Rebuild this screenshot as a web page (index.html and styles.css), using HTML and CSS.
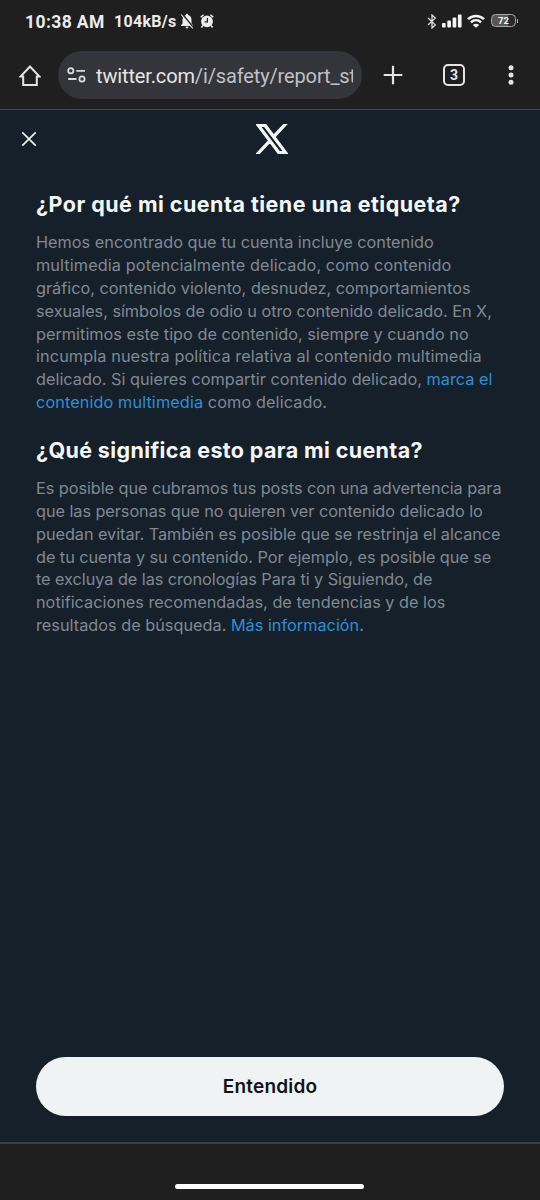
FILE: index.html
```html
<!DOCTYPE html>
<html lang="es">
<head>
<meta charset="utf-8">
<title>X</title>
<link rel="stylesheet" href="styles.css">
</head>
<body>
<div class="phone">
  <header class="chrome">
    <div class="status">
      <span class="clock">10:38 AM</span>
      <span class="speed">104kB/s</span>
      <svg class="bell" width="14" height="16" viewBox="0 0 14 16"><path d="M7 .8c.8 0 1.200.6 1.200 1.200C10.600 2.700 11.500 4.500 11.500 7v3.500l1.500 1.700v.8H1v-.8l1.500-1.700V7c0-2.500.9-4.300 3.300-5C5.800 1.400 6.200.8 7 .8zM5.500 13.800h3c0 2-3 2-3 0z" fill="#ececec"/><path d="M2.300 1l11 13.500" stroke="#1f1f1f" stroke-width="1.500"/><path d="M1.200 1.500l11.500 13.800" stroke="#ececec" stroke-width="1.100"/></svg>
      <svg class="alarm" width="14" height="14" viewBox="0 0 14 14"><circle cx="7" cy="7.400" r="5.900" fill="#ececec"/><path d="M.7 3.300L3.600.8M13.300 3.300L10.400.8M2.900 11.500l-1.500 2M11.100 11.500l1.500 2" stroke="#ececec" stroke-width="1.500"/><path d="M7.400 4v3.900H4.600" fill="none" stroke="#1f1f1f" stroke-width="1.200"/></svg>
      <span class="grow"></span>
      <svg class="bt" width="10" height="15" viewBox="0 0 10 15"><path d="M1 4l7.300 6.900L5 14V1l3.300 3.100L1 11" fill="none" stroke="#dedede" stroke-width="1.300"/></svg>
      <svg class="signal" width="20" height="14" viewBox="0 0 20 14" fill="#f4f4f4"><rect x="0" y="9" width="3.700" height="4.500" rx="1"/><rect x="5.300" y="6.500" width="3.700" height="7" rx="1"/><rect x="10.600" y="3.500" width="3.700" height="10" rx="1"/><rect x="15.900" y=".5" width="3.700" height="13" rx="1"/></svg>
      <svg class="wifi" width="18" height="14" viewBox="0 0 18 14"><path d="M1 5.200c4.600-4.300 11.400-4.300 16 0M3.900 8.400c3-2.800 7.200-2.800 10.200 0" fill="none" stroke="#f4f4f4" stroke-width="2.500"/><path d="M5.800 10.900c2-1.600 4.400-1.600 6.400 0L9 13.800z" fill="#f4f4f4"/></svg>
      <span class="battery">72</span><span class="nub"></span>
    </div>
    <div class="toolbar">
      <svg class="home" width="22" height="23" viewBox="0 0 22 23"><path d="M1.500 12.500H4.200V20.900h13.600V12.500h2.700L11 2.500z" fill="none" stroke="#e4e4e4" stroke-width="2"/></svg>
      <div class="omnibox">
        <svg width="20" height="16" viewBox="0 0 20 16" fill="none" stroke="#dadada" stroke-width="1.800"><circle cx="3.800" cy="3.800" r="2.600"/><path d="M9.300 3.800H18M1.200 12H9.500"/><circle cx="15" cy="12" r="2.600"/></svg>
        <div class="url"><span class="host">twitter.com</span>/i/safety/report_st</div>
      </div>
      <svg class="plus" width="20" height="20" viewBox="0 0 20 20"><path d="M10 .7v18.600M.7 10h18.600" stroke="#e4e4e4" stroke-width="2.200"/></svg>
      <div class="tabs">3</div>
      <svg class="dots" width="6" height="22" viewBox="0 0 6 22" fill="#e4e4e4"><circle cx="3" cy="3.800" r="2.500"/><circle cx="3" cy="11" r="2.500"/><circle cx="3" cy="18.200" r="2.500"/></svg>
    </div>
  </header>
  <main class="page">
    <div class="topbar">
      <svg class="close" width="16" height="16" viewBox="0 0 16 16"><path d="M1.300 1.300l13.400 13.400M14.700 1.300L1.300 14.700" stroke="#eff3f4" stroke-width="1.650"/></svg>
      <svg class="logo" width="32" height="30" viewBox="-5 -5 310 310" preserveAspectRatio="none"><path fill="#f4f7f8" stroke="#f4f7f8" stroke-width="13" d="M178.570 127.150L290.270 0h-26.460l-97.030 110.380L89.340 0H0l117.130 166.930L0 300.250h26.460l102.400-116.590 81.800 116.590H300L178.570 127.150zM36.010 19.540h40.650l187.130 262.130h-40.660z"/></svg>
    </div>
    <h2 class="h1st">¿Por qué mi cuenta tiene una etiqueta?</h2>
    <p class="body">Hemos encontrado que tu cuenta incluye contenido<br><span class="loose">multimedia potencialmente delicado, como contenido</span><br>gráfico, contenido violento, desnudez, comportamientos<br><span class="tight">sexuales, símbolos de odio u otro contenido delicado. En X,</span><br>permitimos este tipo de contenido, siempre y cuando no<br><span class="loose">incumpla nuestra política relativa al contenido multimedia</span><br>delicado. Si quieres compartir contenido delicado, <a>marca el</a><br><span class="loose"><a>contenido multimedia</a> como delicado.</span></p>
    <h2 class="h2nd">¿Qué significa esto para mi cuenta?</h2>
    <p class="body second">Es posible que cubramos tus posts con una advertencia para<br>que las personas que no quieren ver contenido delicado lo<br>puedan evitar. También es posible que se restrinja el alcance<br>de tu cuenta y su contenido. Por ejemplo, es posible que se<br>te excluya de las cronologías Para ti y Siguiendo, de<br><span class="even">notificaciones recomendadas, de tendencias y de los</span><br><span class="even">resultados de búsqueda. <a>Más información</a>.</span></p>
    <button class="ok">Entendido</button>
  </main>
  <footer class="nav"><div class="pill"></div></footer>
</div>
</body>
</html>
```
FILE: styles.css
```css
* { box-sizing: border-box; }
body { margin: 0; background: #1f1f1f; }
svg { display: block; flex: none; }
.phone { width: 540px; height: 1200px; display: flex; flex-direction: column; overflow: hidden; font-family: Inter, "Liberation Sans", sans-serif; }
.chrome { height: 110px; background: #1f1f1f; border-bottom: 1px solid #464b50; font-family: Roboto, sans-serif; flex: none; }
.status { height: 43px; padding: 0 22px 0 25px; display: flex; align-items: center; color: #ececec; font-weight: 700; white-space: nowrap; }
.clock { font-size: 17.500px; letter-spacing: .4px; width: 89px; }
.speed { font-size: 16px; letter-spacing: .3px; width: 66px; }
.bell, .alarm { margin-top: -1px; }
.alarm { margin-left: 6px; }
.grow { flex: 1; }
.bt { margin-right: 5px; margin-top: -1px; }
.signal { margin-right: 5px; margin-top: -1px; }
.wifi { margin-right: 6px; margin-top: -1px; }
.battery { width: 25px; height: 13px; margin-top: -2px; border: 1.500px solid #aaa; border-radius: 4.500px; background: linear-gradient(90deg, #585858 70%, #2a2a2a 70%); font-size: 9.500px; line-height: 11px; text-align: center; color: #f4f4f4; }
.nub { width: 1px; height: 4px; background: #aaa; margin-left: 1px; margin-top: -2px; }
.toolbar { height: 64px; display: flex; align-items: center; padding: 0 26px 0 19px; }
.omnibox { width: 304px; height: 48px; margin-left: 17px; margin-right: 21px; padding: 0 9px; border-radius: 24px; background: #34353a; display: flex; align-items: center; gap: 9px; }
.url { width: 257px; overflow: hidden; white-space: nowrap; color: #c0c1c4; font-size: 20px; letter-spacing: -.14px; line-height: 28px; padding-top: 2px; }
.host { color: #e6e6e8; }
.tabs { width: 22px; height: 22px; margin-left: 40px; margin-right: auto; border: 2px solid #e4e4e4; border-radius: 5px; color: #e4e4e4; font-weight: 700; font-size: 14px; line-height: 18px; text-align: center; }
.page { height: 1032px; background: #16202a; padding: 0 36px; display: flex; flex-direction: column; flex: none; }
.topbar { height: 58px; margin: 0 -15px; display: flex; align-items: center; }
.logo { margin-left: 219px; }
h2 { margin: 0; color: #f4f7f8; font-weight: 700; font-size: 21.500px; letter-spacing: .47px; line-height: 28px; white-space: nowrap; }
.h1st { margin-top: 22px; }
.h2nd { margin-top: 22px; letter-spacing: .37px; }
.body { margin: 13.400px 0 0; color: #808993; font-size: 16.300px; line-height: 22.800px; white-space: nowrap; }
.second { letter-spacing: -.06px; }
.loose { letter-spacing: .09px; }
.tight { letter-spacing: -.03px; }
.even { letter-spacing: 0; }
.body a { color: #2b90d9; }
.ok { margin: auto 0 26px; height: 59px; flex: none; border: 0; padding: 0; border-radius: 30px; background: #eff3f4; color: #0f1419; font: 600 19px Inter, sans-serif; letter-spacing: .2px; }
.nav { flex: 1; border-top: 2px solid #3a4248; background: #1f1f1f; padding-top: 40px; }
.pill { width: 189px; height: 5px; margin-left: 175px; border-radius: 3px; background: #fff; }
```
